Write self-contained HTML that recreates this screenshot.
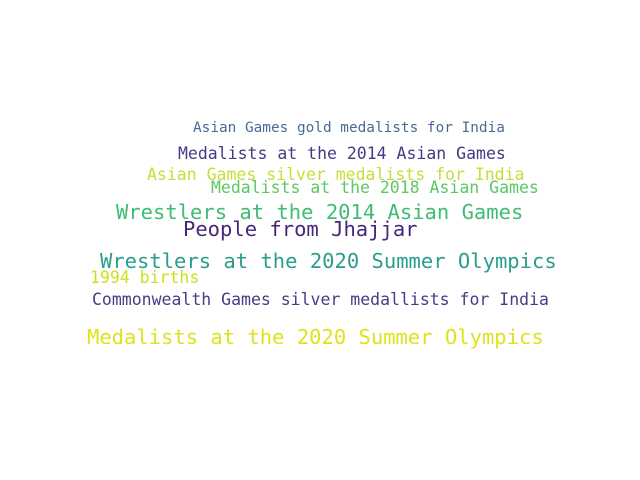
<!DOCTYPE html>
<html><head><meta charset="utf-8"><style>
html,body{margin:0;padding:0;background:#fff;width:640px;height:480px;overflow:hidden}
text{font-family:"DejaVu Sans Mono","Liberation Mono",monospace}
</style></head><body>
<svg width="640" height="480" xmlns="http://www.w3.org/2000/svg">
<text x="193" y="132" font-size="14.4" fill="#4a6a98">Asian Games gold medalists for India</text>
<text x="178" y="159" font-size="16.5" fill="#453a83">Medalists at the 2014 Asian Games</text>
<text x="147" y="180" font-size="16.5" fill="#c4df35">Asian Games silver medalists for India</text>
<text x="211" y="193" font-size="16.5" fill="#5cc863">Medalists at the 2018 Asian Games</text>
<text x="116" y="219" font-size="20.5" fill="#3fbc73">Wrestlers at the 2014 Asian Games</text>
<text x="183" y="236" font-size="20.5" fill="#482677">People from Jhajjar</text>
<text x="100" y="268" font-size="20.5" fill="#2a9d8c">Wrestlers at the 2020 Summer Olympics</text>
<text x="90" y="283" font-size="16.5" fill="#cde11d">1994 births</text>
<text x="92" y="305" font-size="16.5" fill="#433e85">Commonwealth Games silver medallists for India</text>
<text x="87" y="344" font-size="20.5" fill="#dde31c">Medalists at the 2020 Summer Olympics</text>
</svg>
</body></html>
